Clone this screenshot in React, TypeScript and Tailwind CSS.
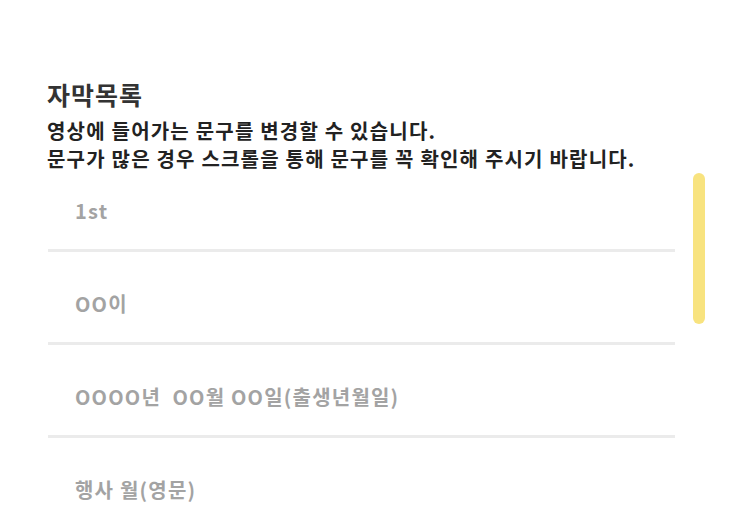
const rows = ['1st', 'OO이', 'OOOO년  OO월 OO일(출생년월일)', '행사 월(영문)']

export default function App() {
  return (
    <div className="h-[527px] w-[749px] overflow-hidden bg-white font-['Noto_Sans_CJK_KR',sans-serif]">
      <div className="pl-[47px] pt-[78px]">
        <h2 className="text-[25px] font-bold leading-[32px] tracking-[1px] text-[#333]">자막목록</h2>
        <p className="mt-[7px] whitespace-pre text-[20px] font-semibold leading-[28px] tracking-[1.2px] text-[#222]">
          영상에 들어가는 문구를 변경할 수 있습니다.
          <br />
          문구가 많은 경우 스크롤을 통해 문구를 꼭 확인해 주시기 바랍니다.
        </p>
      </div>

      <div className="flex h-[354px] gap-[18px] pl-[48px]">
        <div className="w-[627px] overflow-hidden">
          <ul className="-mt-[14px]">
            {rows.map((r) => (
              <li
                key={r}
                className="whitespace-pre border-b-[3px] border-[#ebebeb] pb-[24px] pl-[27px] pt-[38px] text-[20px] font-semibold leading-[28px] tracking-[1.2px] text-[#a3a3a3]"
              >
                {r}
              </li>
            ))}
          </ul>
        </div>
        <div className="h-[151px] w-[12px] rounded-full bg-[#f8e37f]" />
      </div>
    </div>
  )
}
